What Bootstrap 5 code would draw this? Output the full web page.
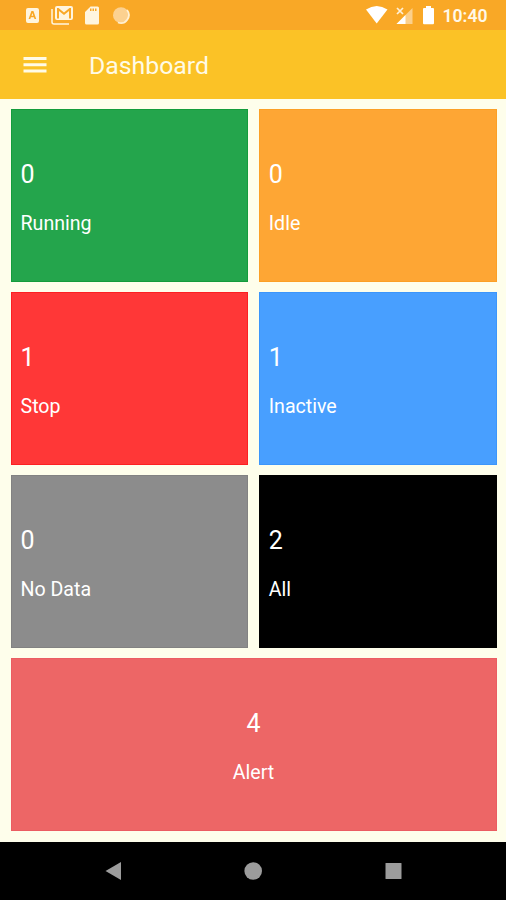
<!DOCTYPE html>
<html lang="en">
<head>
<meta charset="utf-8">
<meta name="viewport" content="width=device-width, initial-scale=1">
<title>Dashboard</title>
<link href="https://cdn.jsdelivr.net/npm/bootstrap@5.3.0/dist/css/bootstrap.min.css" rel="stylesheet">
<style>
body{font-family:Roboto,"Liberation Sans",sans-serif;background:#fefeeb;color:#fff;height:900px;overflow:hidden}
svg{display:block;flex:none}
.status{height:30px;background:#f9a826;padding:0 18.500px 0 24px}
.clock{font-size:17.600px;font-weight:600;line-height:30px;padding-top:1px;margin-left:6px;color:#fff8e8}
.appbar{height:69px;background:#fbc226;padding:0 23px}
.title{font-size:24.800px;line-height:30px;margin-left:42px;padding-top:3px;color:#fffbe6;font-weight:400}
.tiles{height:743px;display:grid;grid-template-columns:1fr 1fr;grid-auto-rows:172.500px;gap:10.5px;padding:10px 9.5px 0 10.5px}
.tile{padding:7.500px 9px 0;border:1px solid}
.count{font-size:25px;line-height:30px;margin-bottom:20px;margin-top:-1px}
.label{font-size:19.600px;line-height:28px}
.running{background:#24a54c;border-color:#149c3c}
.idle{background:#fea634;border-color:#fca026}
.stop{background:#ff3737;border-color:#fc2022}
.inactive{background:#489fff;border-color:#3c96fb}
.nodata{background:#8c8c8c;border-color:#828282}
.all{background:#000;border-color:#000}
.alerts{background:#ed6666;border-color:#eb5d62;grid-column:span 2}
.sysnav{height:58px;background:#000;color:#9c9c9c}
</style>
</head>
<body class="d-flex flex-column">
<div class="status d-flex align-items-center justify-content-between">
  <svg width="110" height="30" viewBox="24 0 110 30" fill="#fff5df">
    <path fill-rule="evenodd" d="M28 8h9q2 0 2 2v11q0 2-2 2h-9q-2 0-2-2V10q0-2 2-2zm3.400 3-2.800 8h1.700l.6-1.800h3l.6 1.800h1.700l-2.800-8zm1 2 .9 2.800h-1.800z"/>
    <path d="M52 9v13q0 2 2 2h15" fill="none" stroke="#fff5df" stroke-width="1.500"/>
    <path fill-rule="evenodd" d="M57 6h14q2 0 2 2v10q0 2-2 2H57q-2 0-2-2V8q0-2 2-2zm0 2v10.500h2V11l5 4 5-4v7.500h2V8h-1.500L64 12.500 58.500 8z"/>
    <path fill-rule="evenodd" d="M90.500 6.500h7q1.500 0 1.500 1.500v15q0 1.500-1.500 1.500h-11q-1.500 0-1.500-1.500V12zM90 8.500v2.500h1.500V8.500zm2.500 0V11H94V8.500zm2.500 0V11h1.500V8.500z"/>
    <circle cx="121" cy="15.200" r="8" fill="#fcd190"/>
    <path d="M127 10a8 8 0 0 1-9 12.500" fill="none" stroke="#fff0d4" stroke-width="1.800"/>
  </svg>
  <div class="d-flex align-items-center">
    <svg width="72" height="30" viewBox="365 0 72 30" fill="#fff">
      <path d="M366 9.500q10.700-7 21.500 0L376.700 23.500z"/>
      <path d="M412.500 8v16h-16z" fill="#fcd08b"/>
      <path d="M405.500 15v9h-9z"/>
      <path d="m397 8 6 6m0-6-6 6" stroke="#fff1d8" stroke-width="1.700"/>
      <path d="M426 6h5v2h2q1 0 1 1v14q0 1.200-1 1.200h-9q-1 0-1-1.200V9q0-1 1-1h2z"/>
    </svg>
    <div class="clock">10:40</div>
  </div>
</div>
<header class="appbar d-flex align-items-center">
  <svg width="24" height="20" viewBox="0 0 24 20" fill="#fffbe6"><path d="M.5 2h23v3H.5zm0 6.300h23v3H.5zm0 6.300h23v3H.5z"/></svg>
  <h1 class="title mb-0">Dashboard</h1>
</header>
<main class="tiles">
  <div class="tile running d-flex flex-column justify-content-center"><div class="count">0</div><div class="label">Running</div></div>
  <div class="tile idle d-flex flex-column justify-content-center"><div class="count">0</div><div class="label">Idle</div></div>
  <div class="tile stop d-flex flex-column justify-content-center"><div class="count">1</div><div class="label">Stop</div></div>
  <div class="tile inactive d-flex flex-column justify-content-center"><div class="count">1</div><div class="label">Inactive</div></div>
  <div class="tile nodata d-flex flex-column justify-content-center"><div class="count">0</div><div class="label">No Data</div></div>
  <div class="tile all d-flex flex-column justify-content-center"><div class="count">2</div><div class="label">All</div></div>
  <div class="tile alerts d-flex flex-column justify-content-center text-center"><div class="count">4</div><div class="label">Alert</div></div>
</main>
<nav class="sysnav d-flex justify-content-center">
  <svg width="300" height="58" viewBox="103 842 300 58" fill="currentColor"><path d="M105.500 871 121 862v18z"/><circle cx="253.200" cy="871" r="8.800"/><rect x="385.500" y="863" width="16" height="16" rx=".6"/></svg>
</nav>
<script src="https://cdn.jsdelivr.net/npm/bootstrap@5.3.0/dist/js/bootstrap.bundle.min.js"></script>
</body>
</html>
